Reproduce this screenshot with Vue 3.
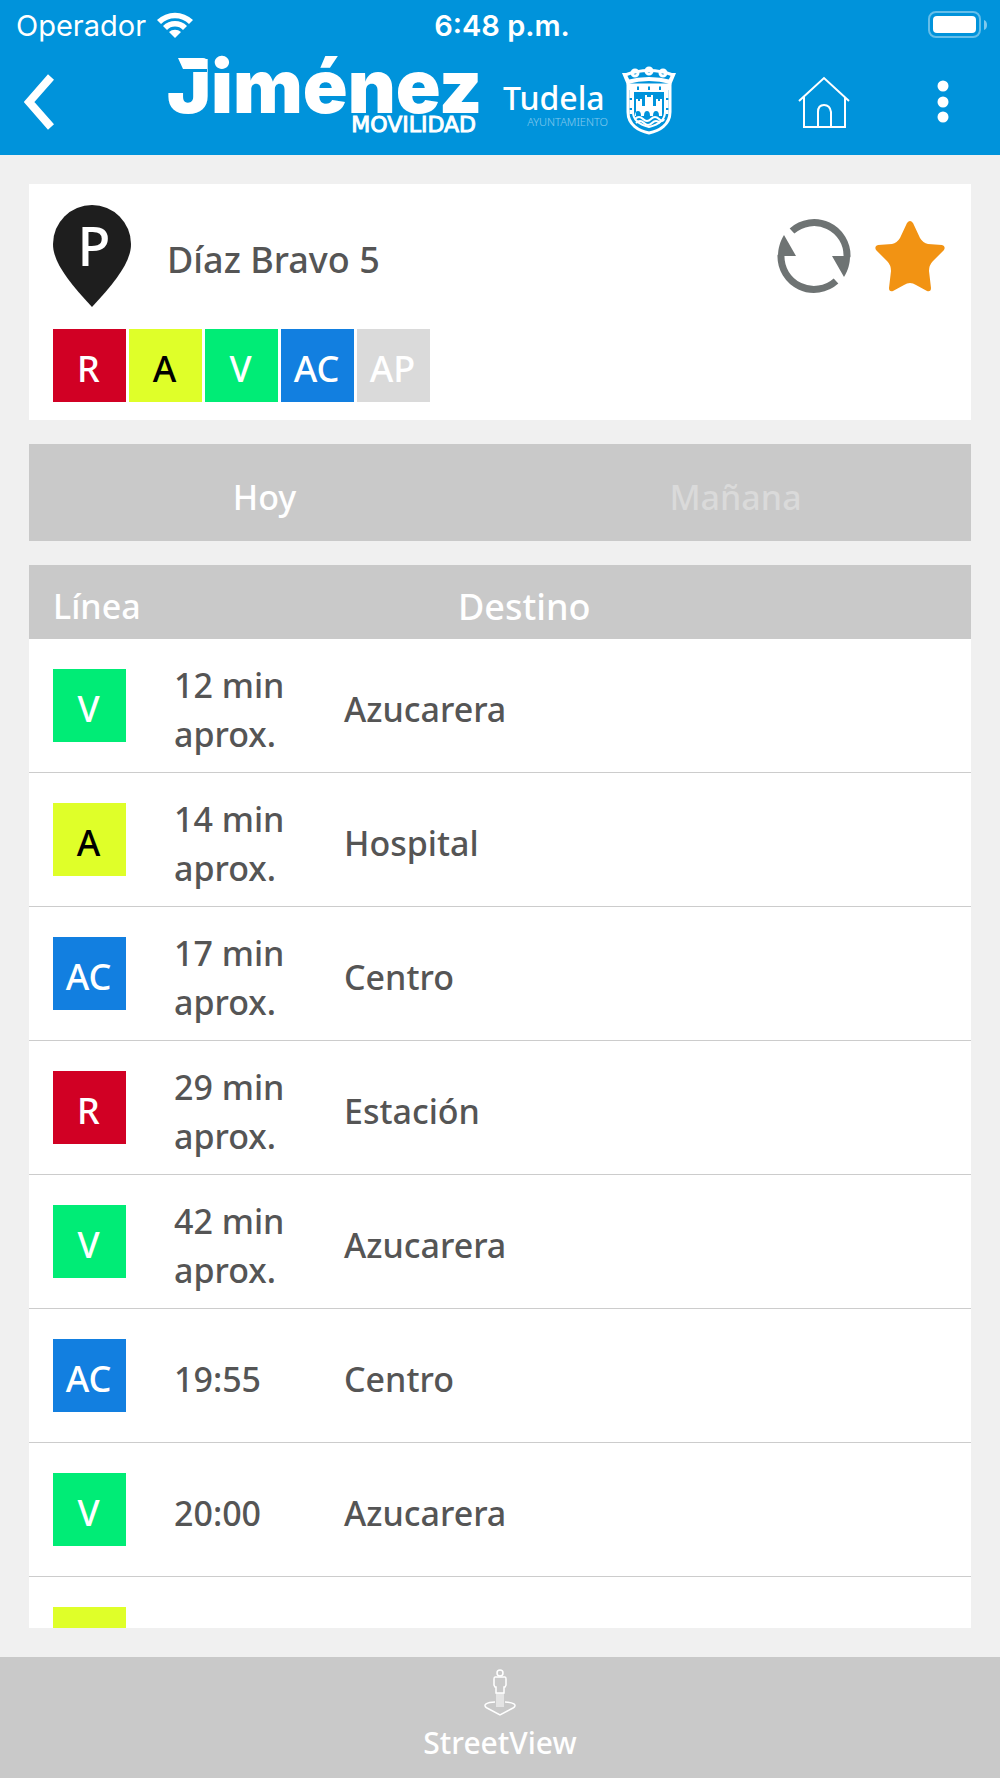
<template>
  <div class="app">
    <header class="header">
      <div class="status-bar">
        <span class="carrier">
          Operador
          <svg class="wifi" width="38" height="28" viewBox="0 0 38 28" aria-hidden="true">
            <path d="M1 9a26 26 0 0 1 36 0l-4 4a20 20 0 0 0-28 0z" fill="#fff" />
            <path d="M7 15a17 17 0 0 1 24 0l-4 4a11 11 0 0 0-16 0z" fill="#fff" />
            <path d="M13 21a9 9 0 0 1 12 0l-6 6z" fill="#fff" />
          </svg>
        </span>
        <span class="clock">6:48 p.m.</span>
        <svg class="battery" width="60" height="28" viewBox="0 0 60 28" aria-hidden="true">
          <rect x="1" y="1" width="51" height="25" rx="7" fill="none" stroke="#fff" stroke-width="2" opacity="0.4" />
          <rect x="5" y="5" width="43" height="17" rx="4" fill="#fff" />
          <path d="M56 9q3 1 3 5t-3 5z" fill="#fff" opacity="0.5" />
        </svg>
      </div>

      <nav class="nav">
        <button class="icon-button" aria-label="Volver">
          <svg width="30" height="56" viewBox="0 0 30 56">
            <path d="M27 3 5 28l22 25" fill="none" stroke="#fff" stroke-width="8" />
          </svg>
        </button>
        <svg class="logo" width="310" height="84" viewBox="0 0 310 84">
          <text class="logo-name" x="-1" y="60">Jiménez</text>
          <path d="M10 5h25q4 0 4 4v7H15z" fill="#fff" />
          <path d="M10 16h29v3H10z" fill="#0093db" />
          <text class="logo-tag" x="308" y="79" text-anchor="end">MOVILIDAD</text>
        </svg>
        <svg class="city" width="176" height="74" viewBox="0 0 176 74">
          <text class="city-name" x="0" y="45">Tudela</text>
          <text class="city-tag" x="105" y="61" text-anchor="end">AYUNTAMIENTO</text>
          <g fill="none" stroke="#fff">
            <path d="M122 10q24-9 48 0" stroke-width="3" />
            <path d="M124 17q22-6 44 0" stroke-width="4" />
            <path d="M125 20v27c0 13 11 19 21 21 10-2 21-8 21-21V20z" stroke-width="3" />
            <path d="M130 26v21c0 9 8 13 16 15 8-2 16-6 16-15V26z" stroke-width="2" />
            <path d="M125 23h42" stroke-width="4" stroke-dasharray="9 2" />
            <path d="M128 25v24M164 25v24" stroke-width="3" stroke-dasharray="8 2" />
            <path d="M132 54q4-4 8 0t8 0 8 0 5 0M133 58q4-4 8 0t8 0 8 0" stroke-width="2" />
            <circle cx="132" cy="8" r="3" stroke-width="3" />
            <circle cx="146" cy="6" r="3" stroke-width="3" />
            <circle cx="160" cy="8" r="3" stroke-width="3" />
          </g>
          <path d="M119 8h4l5 10-4 2zM173 8h-4l-5 10 4 2z" fill="#fff" />
          <path
            d="M133 51V34h2v2h2v-2h2v7h3V30h2v2h4v-2h2v11h3v-7h2v2h2v-2h2v17h-3q0-5-3-5t-3 5h-3q0-5-3-5t-3 5h-3q0-5-3-5t-3 5z"
            fill="#fff"
          />
        </svg>
        <div class="nav-actions">
          <button class="icon-button" aria-label="Inicio">
            <svg width="52" height="54" viewBox="0 0 52 54" fill="none" stroke="#fff" stroke-width="2">
              <path d="M1 26 26 3l25 23M6 22v30h41V22M20 52V37q0-7 6-7t7 7v15" />
            </svg>
          </button>
          <button class="icon-button" aria-label="Menú">
            <svg width="12" height="44" viewBox="0 0 12 44" fill="#fff">
              <circle cx="6" cy="6" r="5.5" />
              <circle cx="6" cy="22" r="5.5" />
              <circle cx="6" cy="37" r="5.5" />
            </svg>
          </button>
        </div>
      </nav>
    </header>

    <main class="content">
      <section class="stop-card">
        <div class="stop-info">
          <svg class="pin" width="78" height="102" viewBox="0 0 78 102" aria-hidden="true">
            <path d="M39 0a39 39 0 0 1 39 39c0 18-15 37-39 63C15 76 0 57 0 39A39 39 0 0 1 39 0z" fill="#1e1e1e" />
            <text class="pin-letter" x="41" y="61" text-anchor="middle">P</text>
          </svg>
          <h1 class="stop-name">Díaz Bravo 5</h1>
          <div class="stop-actions">
            <button class="icon-button" aria-label="Actualizar">
              <svg width="74" height="74" viewBox="0 0 74 74">
                <path
                  d="M15 12A33 33 0 0 1 70 38M59 62A33 33 0 0 1 4 36"
                  fill="none"
                  stroke="#6e7373"
                  stroke-width="7"
                />
                <path d="M55 37h18c0 8-2 14-6 21zM19 37H1c0-8 2-14 6-21z" fill="#6e7373" />
              </svg>
            </button>
            <button class="icon-button" aria-label="Quitar de favoritos">
              <svg width="70" height="72" viewBox="0 0 70 72">
                <path
                  d="M32 3q3-4 6 0l7 15q3 5 8 6l14 1q4 1 2 5L58 41q-4 4-4 10l2 17q0 4-4 3l-11-6q-6-4-12 0l-11 6q-4 1-4-3l2-17q0-6-4-10L1 30q-2-4 2-5l14-1q5-1 8-6z"
                  fill="#f29313"
                />
              </svg>
            </button>
          </div>
        </div>
        <div class="stop-lines">
          <span v-for="line in stopLines" :key="line" class="line-badge" :class="'line-' + line.toLowerCase()">
            {{ line }}
          </span>
        </div>
      </section>

      <div class="tabs">
        <button
          v-for="tab in tabs"
          :key="tab"
          class="tab"
          :class="{ active: tab === activeTab }"
          @click="activeTab = tab"
        >
          {{ tab }}
        </button>
      </div>

      <div class="arrivals">
        <table class="arrivals-table">
          <thead>
            <tr>
              <th class="col-line">Línea</th>
              <td class="col-time"></td>
              <th class="col-destination">Destino</th>
            </tr>
          </thead>
          <tbody>
            <tr v-for="(arrival, index) in arrivals" :key="index">
              <td class="col-line">
                <span class="line-badge" :class="'line-' + arrival.line.toLowerCase()">
                  {{ arrival.time ? arrival.line : '' }}
                </span>
              </td>
              <td class="col-time">{{ arrival.time }}</td>
              <td>{{ arrival.destination }}</td>
            </tr>
          </tbody>
        </table>
      </div>
    </main>

    <button class="street-view">
      <svg width="34" height="48" viewBox="0 0 34 48" fill="none" stroke="#fff" aria-hidden="true">
        <circle cx="17" cy="5" r="3" stroke-width="1.5" />
        <path d="M12 9h10q1 0 1 2v6l-1 2h-1v6h-8v-6h-1l-1-2v-6q0-2 1-2z" stroke-width="1.5" />
        <path d="M14 25v14M16 25v14M18 25v14M20 25v14" stroke-width="1" />
        <path d="M12 34C4 34-1 37 4 40l13 7 13-7c5-3 0-6-8-6" stroke-width="1.5" />
      </svg>
      StreetView
    </button>
  </div>
</template>

<script setup>
import { ref } from 'vue'

const stopLines = ['R', 'A', 'V', 'AC', 'AP']

const tabs = ['Hoy', 'Mañana']
const activeTab = ref('Hoy')

const arrivals = ref([
  { line: 'V', time: '12 min aprox.', destination: 'Azucarera' },
  { line: 'A', time: '14 min aprox.', destination: 'Hospital' },
  { line: 'AC', time: '17 min aprox.', destination: 'Centro' },
  { line: 'R', time: '29 min aprox.', destination: 'Estación' },
  { line: 'V', time: '42 min aprox.', destination: 'Azucarera' },
  { line: 'AC', time: '19:55', destination: 'Centro' },
  { line: 'V', time: '20:00', destination: 'Azucarera' },
  { line: 'A', time: '', destination: '' }
])
</script>

<style>
body {
  margin: 0;
  background: #f0f0f0;
}
</style>

<style scoped>
.app {
  display: flex;
  flex-direction: column;
  height: 100vh;
  font-family: 'Noto Sans', sans-serif;
  font-weight: 500;
  color: #555;
}

button {
  border: none;
  margin: 0;
  padding: 0;
  font: inherit;
  cursor: pointer;
}

svg {
  display: block;
  flex-shrink: 0;
}

.icon-button {
  background: none;
}

/* cabecera */
.header {
  background: #0093db;
  color: #fff;
  height: 155px;
  flex-shrink: 0;
}

.status-bar {
  display: grid;
  grid-template-columns: 1fr auto 1fr;
  align-items: center;
  height: 50px;
  padding: 0 12px 0 16px;
  font-family: Inter, sans-serif;
  font-size: 29px;
  font-weight: 400;
}

.carrier {
  display: flex;
  align-items: center;
  gap: 10px;
}

.clock {
  font-weight: 600;
}

.battery {
  justify-self: end;
}

.nav {
  display: flex;
  align-items: center;
  height: 104px;
  padding: 0 51px 0 24px;
}

.logo {
  margin-left: 114px;
  margin-bottom: 14px;
  overflow: visible;
}

.logo-name {
  font-family: Inter, sans-serif;
  font-size: 74px;
  font-weight: 900;
  fill: #fff;
}

.logo-tag {
  font-family: 'DejaVu Sans', sans-serif;
  font-size: 22px;
  font-weight: 400;
  fill: #fff;
  stroke: #fff;
  stroke-width: 1px;
}

.city {
  margin-left: 25px;
}

.city-name {
  font-size: 32px;
  fill: #fff;
}

.city-tag {
  font-size: 11px;
  font-weight: 300;
  fill: #fff;
  opacity: 0.5;
}

.nav-actions {
  display: flex;
  align-items: center;
  gap: 87px;
  margin-left: auto;
}

/* contenido */
.content {
  display: flex;
  flex-direction: column;
  flex: 1;
  min-height: 0;
  gap: 24px;
  padding: 29px;
}

.stop-card {
  background: #fff;
  padding: 21px 26px 18px 24px;
}

.stop-info {
  display: flex;
  align-items: center;
}

.stop-name {
  margin: 6px 0 0 36px;
  font-size: 36px;
  font-weight: 500;
}

.stop-actions {
  display: flex;
  align-items: center;
  gap: 24px;
  margin-left: auto;
}

.pin-letter {
  font-size: 54px;
  fill: #fff;
}

.stop-lines {
  display: flex;
  gap: 3px;
  margin-top: 22px;
}

.line-badge {
  display: flex;
  align-items: center;
  justify-content: center;
  box-sizing: border-box;
  width: 73px;
  height: 73px;
  padding: 5px 2px 0 0;
  font-size: 36px;
  color: #fff;
}

.line-r {
  background: #d10024;
}

.line-a {
  background: #dfff29;
  color: #000;
}

.line-v {
  background: #00ec76;
}

.line-ac {
  background: #127fe0;
}

.line-ap {
  background: #dadada;
}

.tabs {
  display: flex;
  flex-shrink: 0;
  height: 97px;
  background: #c9c9c9;
}

.tab {
  flex: 1;
  padding-top: 8px;
  background: none;
  font-size: 34px;
  color: #dadada;
}

.tab.active {
  color: #fff;
}

.arrivals {
  flex: 1;
  min-height: 0;
  overflow: hidden;
  background: #fff;
}

.arrivals-table {
  width: 100%;
  table-layout: fixed;
  border-collapse: separate;
  border-spacing: 0;
  font-size: 34px;
  line-height: 49px;
}

.arrivals-table th,
.arrivals-table td {
  box-sizing: border-box;
  padding: 8px 0 0;
  text-align: left;
  font-weight: 500;
}

.arrivals-table thead th,
.arrivals-table thead td {
  height: 74px;
  background: #c9c9c9;
  color: #fff;
}

.arrivals-table tbody td {
  height: 134px;
  border-bottom: 1px solid #ccc;
}

.arrivals-table .col-line {
  width: 145px;
  padding-left: 24px;
}

.arrivals-table tbody .col-line {
  padding-top: 0;
}

.arrivals-table .col-time {
  width: 170px;
  padding-right: 40px;
}

.arrivals-table .col-destination {
  padding-left: 114px;
  font-size: 36px;
}

/* pie */
.street-view {
  display: flex;
  flex-direction: column;
  align-items: center;
  gap: 6px;
  flex-shrink: 0;
  height: 121px;
  padding-top: 11px;
  background: #c9c9c9;
  color: #fff;
  font-size: 30px;
}
</style>
